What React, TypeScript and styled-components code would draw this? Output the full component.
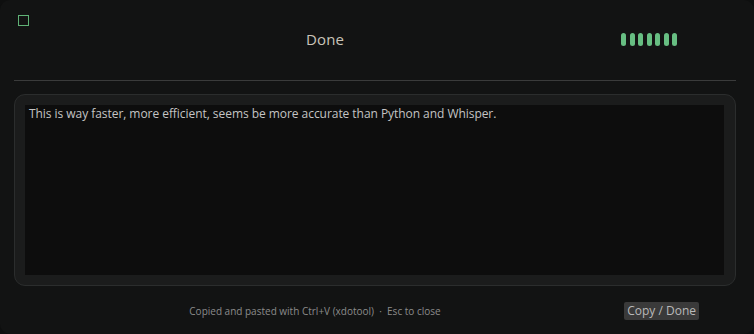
import React from 'react';
import styled, { createGlobalStyle } from 'styled-components';

const GlobalStyle = createGlobalStyle`
  html, body {
    margin: 0;
    padding: 0;
    background: #0e0f0f;
  }
  body {
    font-family: "Open Sans", "Noto Sans", sans-serif;
  }
`;

const Window = styled.div`
  width: 754px;
  height: 334px;
  box-sizing: border-box;
  background: #121313;
  border-radius: 10px;
  display: flex;
  flex-direction: column;
  padding: 0 18px 0 14px;
`;

const Header = styled.div`
  height: 81px;
  display: grid;
  grid-template-columns: 1fr auto 1fr;
  position: relative;
  border-bottom: 1px solid #3a3b3b;
  box-sizing: border-box;
`;

const StatusBox = styled.div`
  position: absolute;
  left: 4px;
  top: 15px;
  width: 9px;
  height: 9px;
  border: 1px solid #5fb276;
`;

const Title = styled.div`
  grid-column: 2;
  align-self: start;
  margin-top: 29px;
  margin-right: 100px;
  font-size: 15px;
  color: #c9c4b9;
  letter-spacing: 0.1px;
`;

const Meter = styled.div`
  grid-column: 3;
  justify-self: end;
  margin-top: 33px;
  margin-right: 59px;
  display: flex;
  gap: 3.5px;
  height: 13px;
`;

const Pill = styled.div`
  width: 5px;
  height: 13px;
  border-radius: 3px;
  background: #67be82;
`;

const Panel = styled.div`
  margin-top: 13px;
  height: 192px;
  box-sizing: border-box;
  border: 1px solid #2b2d2d;
  border-radius: 11px;
  background: #1b1c1c;
  padding: 10px 11px 10px 10px;
  display: flex;
`;

const TextArea = styled.div`
  flex: 1;
  background: #0d0d0d;
  color: #c4c4c4;
  font-size: 12px;
  line-height: 16px;
  padding: 1px 4px;
  letter-spacing: -0.05px;
`;

const Footer = styled.div`
  flex: 1;
  display: grid;
  grid-template-columns: 1fr auto 1fr;
  align-items: center;
  padding-top: 2px;
`;

const Hint = styled.div`
  grid-column: 2;
  font-size: 10px;
  color: #8b8b8b;
  margin-right: 120px;
`;

const CopyButton = styled.button`
  grid-column: 3;
  justify-self: end;
  margin-right: 37px;
  font-family: inherit;
  font-size: 12px;
  color: #b9b9b9;
  background: #3a3a3a;
  border: none;
  border-radius: 2px;
  padding: 1px 3px 2px;
  line-height: 15px;
`;

export default function App() {
  return (
    <>
      <GlobalStyle />
      <Window>
        <Header>
          <StatusBox />
          <Title>Done</Title>
          <Meter>
            {Array.from({ length: 7 }).map((_, i) => (
              <Pill key={i} />
            ))}
          </Meter>
        </Header>
        <Panel>
          <TextArea>
            This is way faster, more efficient, seems be more accurate than Python and Whisper.
          </TextArea>
        </Panel>
        <Footer>
          <Hint>Copied and pasted with Ctrl+V (xdotool) &nbsp;·&nbsp; Esc to close</Hint>
          <CopyButton>Copy / Done</CopyButton>
        </Footer>
      </Window>
    </>
  );
}
